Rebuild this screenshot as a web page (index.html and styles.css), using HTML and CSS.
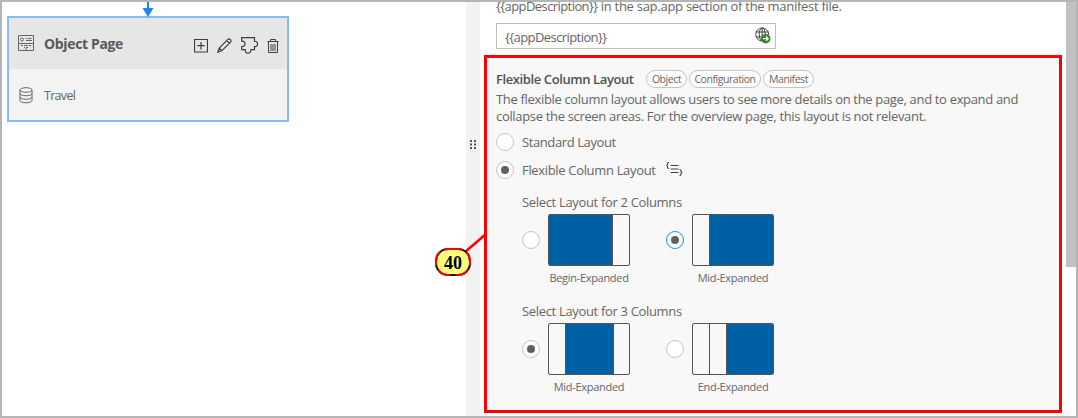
FILE: index.html
```html
<!DOCTYPE html>
<html lang="en">
<head>
<meta charset="utf-8">
<title>Page Map</title>
<link rel="stylesheet" href="styles.css">
</head>
<body>
<div class="frame">
  <main class="canvas">
    <svg class="arrow" width="12" height="15" viewBox="0 0 12 15"><path d="M5 0h2v6h4.500l-5.500 9-5.500-9h4.500z" fill="#1b84ff"/></svg>
    <section class="node">
      <header class="node-head">
        <svg class="icon page-icon" width="18" height="18" viewBox="0 0 18 18"><path d="M1.500 1.500h15v15h-15zM1.500 9.500h15M8.500 4.500h1M10.500 4.500h4M9 6.500h6M4 11.500h2M7 11.500h4M12 11.500h2M7 13.500h1M9 13.500h2M8 15h2"/><circle cx="5" cy="5.500" r="1.500"/></svg>
        <h2 class="node-title">Object Page</h2>
        <div class="tools">
          <svg class="icon dark" width="14" height="14" viewBox="0 0 14 14"><path d="M.5 .5h13v12.500h-13zM7 3v7.500M3.200 6.700h7.600"/></svg>
          <svg class="icon dark" width="15" height="15" viewBox="0 0 15 15"><path d="M.8 14.200l1.500-4L11 1.200q1-.8 2.200.3t.5 2.300L5 12.600zM2.300 10.200l2.700 2.400M9.700 2.600l2.700 2.600"/></svg>
          <svg class="icon dark" width="17" height="17" viewBox="0 0 17 17"><path d="M.7.700H13.500V4.300Q16.500 4 16.500 7T13.500 9.500V12.700H10Q9.800 16.200 7 16.200T4.200 12.700H.7V9.500Q4 9.500 4 6.700T.7 4.200z"/></svg>
          <svg class="icon dark thin" width="12" height="14" viewBox="0 0 12 14"><path d="M.5 2.500h11M3.500 2V.5h5V2M1.500 3v10.500h9V3M4 5v7M6 5v7M8 5v7"/></svg>
        </div>
      </header>
      <div class="node-row">
        <svg class="icon" width="14" height="17" viewBox="0 0 14 17"><ellipse cx="7" cy="3" rx="6" ry="2.300"/><path d="M1 3v10.500c0 3 12 3 12 0V3M1 6.500c0 3 12 3 12 0M1 10c0 3 12 3 12 0"/></svg>
        <span class="node-text">Travel</span>
      </div>
    </section>
  </main>
  <div class="splitter">
    <svg width="6" height="9" viewBox="0 0 6 9"><path d="M0 0h2v2H0zM4 0h2v2H4zM0 3.500h2v2H0zM4 3.500h2v2H4zM0 7h2v2H0zM4 7h2v2H4z" fill="#555"/></svg>
  </div>
  <aside class="panel">
    <p class="text intro"><span class="token">{{appDescription}}</span> in the sap.app section of the manifest file.</p>
    <div class="field">
      <span class="token">{{appDescription}}</span>
      <svg width="16" height="17" viewBox="0 0 16 17"><g fill="none" stroke="#444"><circle cx="7.200" cy="7.500" r="6.500"/><ellipse cx="7.200" cy="7.500" rx="3" ry="6.500"/><path d="M1 5h12.500M1 10h12.500M7.200 1v13"/></g><circle cx="10.700" cy="11.700" r="4.800" fill="#36882f"/><path d="M8 11.700h5M11 9.500l2.200 2.200-2.200 2.200" fill="none" stroke="#fff" stroke-width="1.200"/></svg>
    </div>
    <section class="group">
      <div class="group-head">
        <h3 class="group-title">Flexible Column Layout</h3>
        <span class="tag tag-o">Object</span><span class="tag tag-c">Configuration</span><span class="tag tag-m">Manifest</span>
      </div>
      <p class="text desc">The flexible column layout allows users to see more details on the page, and to expand and<br>collapse the screen areas. For the overview page, this layout is not relevant.</p>
      <div class="option"><i class="radio"></i><span class="text standard">Standard Layout</span></div>
      <div class="option"><i class="radio on"></i><span class="text">Flexible Column Layout</span>
        <svg class="code" width="17" height="14" viewBox="0 0 17 14"><path d="M3 .5Q1.500.500 1.500 2T.3 3.500Q1.500 3.500 1.500 5T3 6.500M4.500 3.500h8M4.500 7h8M4.500 10.500h8M13.500 7.500Q15 7.500 15 9T16.300 10.300Q15 10.500 15 12T13.500 13.500" fill="none" stroke="#444" stroke-width="1.200"/></svg>
      </div>
      <div class="layouts">
        <h4 class="text sub">Select Layout for 2 Columns</h4>
        <div class="choices">
          <div class="choice"><i class="radio"></i><div class="thumb be"><b class="fill"></b><b></b></div><span class="caption">Begin-Expanded</span></div>
          <div class="choice"><i class="radio on focus"></i><div class="thumb me2"><b></b><b class="fill"></b></div><span class="caption">Mid-Expanded</span></div>
        </div>
      </div>
      <div class="layouts three">
        <h4 class="text sub">Select Layout for 3 Columns</h4>
        <div class="choices">
          <div class="choice"><i class="radio on"></i><div class="thumb me3"><b></b><b class="fill"></b><b></b></div><span class="caption">Mid-Expanded</span></div>
          <div class="choice"><i class="radio"></i><div class="thumb ee"><b></b><b></b><b class="fill"></b></div><span class="caption">End-Expanded</span></div>
        </div>
      </div>
    </section>
  </aside>
  <div class="scrollbar"><div class="thumbbar"></div></div>
  <svg class="callout" width="56" height="50" viewBox="0 0 56 50"><path d="M31 20L52 2" stroke="red" stroke-width="2.500"/><rect x="2" y="17" width="34" height="26" rx="12" fill="#ffff80" stroke="#111" stroke-width="2"/><rect x="2" y="17" width="34" height="26" rx="12" fill="none" stroke="red" stroke-width="2" stroke-dasharray="14 5"/><text class="callout-text" x="19" y="37" text-anchor="middle">40</text></svg>
</div>
</body>
</html>
```
FILE: styles.css
```css
* { box-sizing: border-box; }
body { margin: 0; font-family: "Open Sans", "Noto Sans", sans-serif; font-size: 13px; color: #666; background: #fff; }
h2, h3, h4, p { margin: 0; font-weight: 400; font-size: 13px; }
svg { flex: none; display: block; }
.frame { position: relative; width: 1078px; height: 418px; border: 2px solid #b5b5b5; display: flex; overflow: hidden; }
.canvas { width: 464px; flex: none; padding-left: 5px; }
.arrow { margin: 0 0 -1px 135px; }
.node { width: 282px; height: 106px; border: 2px solid #83bcf7; background: #f3f3f3; }
.node-head { height: 51px; background: #e6e6e6; display: flex; align-items: center; padding-left: 8px; }
.icon { fill: none; stroke: #666; stroke-width: 1; }
.dark { stroke: #3d3d3d; stroke-width: 1.2; }
.thin { stroke-width: 1; }
.page-icon { margin-top: -1px; }
.node-title { font-size: 14px; font-weight: 700; color: #595959; margin-left: 9px; white-space: nowrap; width: 150px; letter-spacing: -.35px; }
.tools { display: flex; align-items: center; gap: 9px; padding-top: 4px; }
.node-row { height: 51px; display: flex; align-items: center; padding: 1px 0 0 10px; gap: 11px; }
.node-text { font-size: 12.5px; letter-spacing: -.7px; }
.splitter { width: 14px; flex: none; background: #f2f2f2; padding: 138px 0 0 4px; }
.panel { width: 586px; flex: none; padding-left: 4px; }
.text { line-height: 17px; white-space: nowrap; letter-spacing: -.33px; }
.intro { margin: -4px 0 0 12px; letter-spacing: -.27px; }
.token { letter-spacing: -.58px; }
.field { margin: 8px 0 0 12px; width: 280px; height: 26px; border: 1px solid #bfbfbf; display: flex; align-items: center; justify-content: space-between; padding: 1px 4px 0 8px; }
.field svg { margin-top: -2px; }
.group { margin-top: 6px; width: 578px; height: 358px; border: 3px solid red; background: #f8f8f8; padding: 11px 0 0 9px; }
.group-head { display: flex; height: 20px; align-items: center; gap: 2px; }
.group-title { font-weight: 600; color: #515151; width: 148px; white-space: nowrap; letter-spacing: -.4px; }
.tag { border: 1px solid #c4c4c4; border-radius: 9px; height: 18px; line-height: 16px; background: #fff; font-size: 10.5px; letter-spacing: -.45px; text-align: center; white-space: nowrap; }
.tag-o { width: 41px; }
.tag-c { width: 72px; }
.tag-m { width: 51px; }
.desc { margin-top: 2px; }
.option { height: 28px; display: flex; align-items: center; gap: 8px; }
.desc + .option { margin-top: 3px; }
.standard { letter-spacing: -.4px; }
.radio { width: 18px; height: 18px; flex: none; border: 1px solid #c5c5c5; border-radius: 50%; background: #fff; display: grid; place-items: center; }
.radio.on::after { content: ""; width: 8px; height: 8px; border-radius: 50%; background: #606060; }
.radio.focus { border-color: #1b90ff; }
.code { margin: -2px 0 0 2px; }
.layouts { padding: 10px 0 0 26px; height: 108px; }
.sub { height: 18px; }
.choices { display: flex; margin-top: 2px; gap: 36px; }
.three { padding-top: 11px; }
.choice { display: grid; grid-template-columns: 18px 82px; column-gap: 8px; align-items: center; }
.thumb { height: 52px; border: 1px solid #555; border-radius: 2px; display: grid; overflow: hidden; }
.thumb b + b { border-left: 1px solid #555; }
.fill { background: #0060a5; }
.be { grid-template-columns: 63px 17px; }
.me2 { grid-template-columns: 16px 64px; }
.me3 { grid-template-columns: 16px 48px 16px; }
.ee { grid-template-columns: 16px 17px 47px; }
.caption { grid-column: 2; font-size: 11px; line-height: 16px; margin-top: 4px; text-align: center; white-space: nowrap; letter-spacing: -.3px; }
.scrollbar { width: 10px; flex: none; }
.thumbbar { height: 265px; background: #c1c1c1; }
.callout { position: absolute; left: 432px; top: 230px; }
.callout-text { font: 700 18px "Liberation Serif", serif; fill: #000; }
```
